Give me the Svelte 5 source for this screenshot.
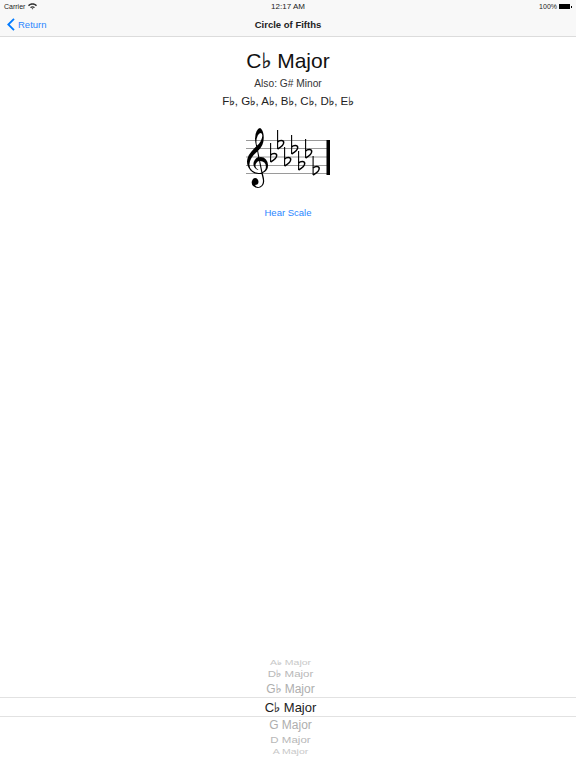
<script lang="ts">
  const notes = ['F♭', 'G♭', 'A♭', 'B♭', 'C♭', 'D♭', 'E♭'];

  // top-left corner of each flat on the staff
  const flats = [
    { x: 270, y: 141 },
    { x: 277, y: 128 },
    { x: 284, y: 145 },
    { x: 291, y: 133 },
    { x: 298, y: 149 },
    { x: 305, y: 137 },
    { x: 312.5, y: 154 },
  ];

  const staffLines = [138.5, 146.5, 155, 163.5, 171.5];

  const wheel = [
    { label: 'E♭ Major', size: 10, scale: 0.4, color: '#d8d8d8', h: 3, pos: 'end' },
    { label: 'A♭ Major', size: 10.5, scale: 0.62, color: '#c8c8c8', h: 9 },
    { label: 'D♭ Major', size: 11.5, scale: 0.85, color: '#b8b8b8', h: 14 },
    { label: 'G♭ Major', size: 12, scale: 1, color: '#aeaeae', h: 16 },
    { label: 'C♭ Major', size: 13, scale: 1, color: '#222', h: 18, selected: true },
    { label: 'G Major', size: 12, scale: 1, color: '#aeaeae', h: 15 },
    { label: 'D Major', size: 11.5, scale: 0.85, color: '#b8b8b8', h: 15 },
    { label: 'A Major', size: 10.5, scale: 0.62, color: '#c8c8c8', h: 9 },
    { label: 'E Major', size: 10, scale: 0.4, color: '#d8d8d8', h: 3, pos: 'start' },
  ];
</script>

{#snippet named(text)}
  {#each text.split('♭') as part, i}{#if i > 0}<span class="fl">♭</span>{/if}{part}{/each}
{/snippet}

<div class="page">
  <header>
    <div class="status">
      <span class="carrier">
        Carrier
        <svg width="9" height="7" viewBox="0 0 9 7" fill="#333">
          <path d="M0 2.2C2.6-.4 6.4-.4 9 2.2L8 3.2C5.9 1.3 3.1 1.3 1 3.2Z" />
          <path d="M2 4.2C3.5 2.8 5.5 2.8 7 4.2L6 5.1C5 4.3 4 4.3 3 5.1Z" />
          <path d="M3.6 5.6C4.1 5.2 4.9 5.2 5.4 5.6L4.5 6.6Z" />
        </svg>
      </span>
      <span class="time">12:17 AM</span>
      <span class="battery">
        100%
        <span class="cell"></span>
      </span>
    </div>
    <nav>
      <a class="back" href="/">
        <svg width="8" height="13" viewBox="0 0 8 13" fill="none" stroke="#007aff" stroke-width="1.8">
          <path d="M7 .8 1.3 6.5 7 12.2" />
        </svg>
        Return
      </a>
      <h1>Circle of Fifths</h1>
    </nav>
  </header>

  <main>
    <h2>{@render named('C♭ Major')}</h2>
    <p class="also">Also: G# Minor</p>
    <p class="notes">{@render named(notes.join(', '))}</p>

    <svg class="staff" width="576" height="66" viewBox="0 124 576 66">
      {#each staffLines as y}
        <line x1="246" x2="328" y1={y} y2={y} stroke="#9a9a9a" stroke-width="1" />
      {/each}
      <rect x="326.5" y="138" width="3.5" height="35" fill="#000" />
      <text class="clef" x="241" y="171">𝄞</text>
      {#each flats as f}
        <g transform="translate({f.x} {f.y})" fill="none" stroke="#000">
          <path d="M.6 0V19" stroke-width="1.1" />
          <path d="M.6 12C2.6 9.8 6.6 9.8 6.7 12.4 6.8 15 3.2 17.6.6 19" stroke-width="1.5" />
        </g>
      {/each}
    </svg>

    <a class="hear" href="/">Hear Scale</a>
  </main>

  <div class="picker">
    {#each wheel as row}
      <div class="row" class:selected={row.selected} style="height: {row.h}px; align-items: {row.pos ?? 'center'}">
        <span class="label" style="font-size: {row.size}px; color: {row.color}; transform: scaleY({row.scale})">{@render named(row.label)}</span>
      </div>
    {/each}
  </div>
</div>

<style>
  :global(body) {
    margin: 0;
    background: #fff;
  }

  .page {
    width: 576px;
    height: 768px;
    display: flex;
    flex-direction: column;
    font-family: 'Liberation Sans', Arial, sans-serif;
    overflow: hidden;
  }

  header {
    height: 37px;
    box-sizing: border-box;
    background: #f8f8f8;
    border-bottom: 1px solid #dcdcdc;
  }

  .status {
    height: 11px;
    padding: 1px 4px 0;
    display: grid;
    grid-template-columns: 1fr auto 1fr;
    align-items: center;
    font-size: 7px;
    color: #222;
  }

  .carrier {
    display: flex;
    align-items: center;
    gap: 3px;
  }

  .time {
    font-size: 8px;
  }

  .battery {
    display: flex;
    align-items: center;
    justify-content: flex-end;
    gap: 2px;
  }

  .cell {
    width: 11px;
    height: 5px;
    background: #000;
    margin-right: 2px;
    position: relative;
  }

  .cell::after {
    content: '';
    position: absolute;
    right: -2px;
    top: 1.5px;
    width: 1px;
    height: 2px;
    background: #000;
  }

  nav {
    position: relative;
    height: 25px;
    display: flex;
    align-items: center;
    justify-content: center;
  }

  .back {
    position: absolute;
    left: 7px;
    top: 6px;
    display: flex;
    align-items: center;
    gap: 3px;
    color: #2a86ff;
    font-size: 9.5px;
    text-decoration: none;
  }

  h1 {
    margin: 0;
    font-size: 9.5px;
    font-weight: 700;
    color: #222;
  }

  main {
    flex: 1;
    display: flex;
    flex-direction: column;
    align-items: center;
  }

  h2 {
    margin: 11px 0 0;
    height: 26px;
    line-height: 26px;
    font-size: 21px;
    font-weight: 400;
    color: #111;
  }

  .fl {
    font-family: 'DejaVu Sans', sans-serif;
    -webkit-text-stroke: 0.02em currentColor;
  }

  .also {
    margin: 4px 0 0;
    font-size: 10.2px;
    line-height: 12px;
    color: #333;
  }

  .notes {
    margin: 5px 0 0;
    font-size: 11.5px;
    line-height: 12px;
    color: #222;
  }

  .staff {
    margin-top: 19px;
    display: block;
  }

  .clef {
    font-family: 'DejaVu Sans', sans-serif;
    font-size: 50px;
    fill: #000;
  }

  .hear {
    margin-top: 15px;
    font-size: 9.5px;
    color: #2a86ff;
    text-decoration: none;
  }

  .picker {
    display: flex;
    flex-direction: column;
    align-items: center;
    box-sizing: border-box;
    padding: 0 0 9px;
  }

  .row {
    width: 100%;
    padding-left: 5px;
    box-sizing: content-box;
    display: flex;
    justify-content: center;
    overflow: hidden;
  }

  .row.selected {
    border-top: 1px solid #e2e2e2;
    border-bottom: 1px solid #e2e2e2;
  }

  .label {
    display: block;
    white-space: nowrap;
  }
</style>
